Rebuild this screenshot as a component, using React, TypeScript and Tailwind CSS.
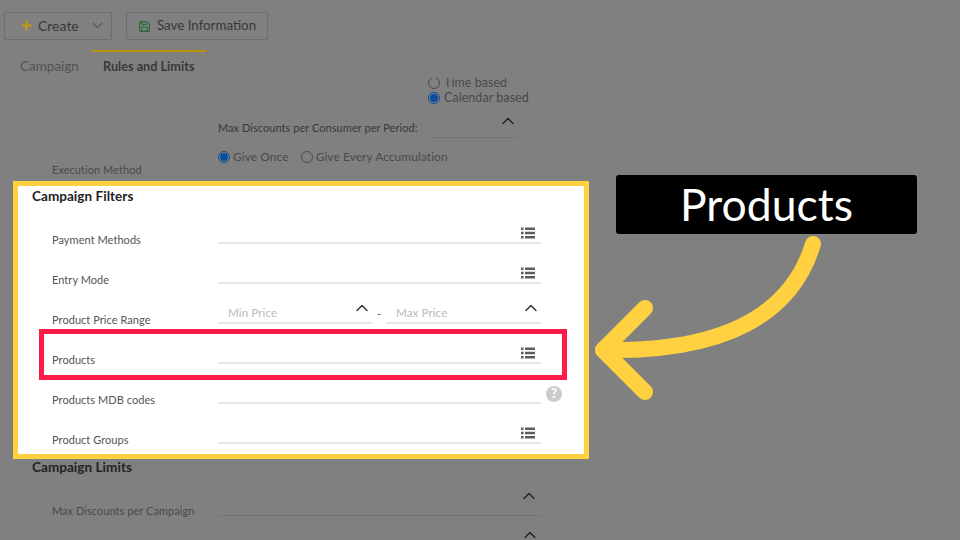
import { ChevronDown, ChevronUp, Plus, Save } from "lucide-react";

function ListIcon() {
  return (
    <svg width="14" height="12" viewBox="0 0 14 12" className="shrink-0 text-[#5c5c5c]" fill="currentColor">
      <rect x="0" y="0.5" width="2.5" height="2.5" />
      <rect x="4" y="0.5" width="10" height="2.5" />
      <rect x="0" y="4.75" width="2.5" height="2.5" />
      <rect x="4" y="4.75" width="10" height="2.5" />
      <rect x="0" y="9" width="2.5" height="2.5" />
      <rect x="4" y="9" width="10" height="2.5" />
    </svg>
  );
}

function Radio({ checked }: { checked?: boolean }) {
  return (
    <span
      className={`flex size-[12px] shrink-0 items-center justify-center rounded-full border ${
        checked ? "border-[#0a4d9c]" : "border-[#4a4a4a]"
      }`}
    >
      {checked && <span className="size-[8px] rounded-full bg-[#0a4d9c]" />}
    </span>
  );
}

function Row({ label, icon, children }: { label: string; icon?: boolean; children?: React.ReactNode }) {
  return (
    <div className="flex h-[40px] items-end pl-[34px] text-[11px] tracking-[0.05px] text-[#555]">
      <span className="-mb-[4px] w-[166px]">{label}</span>
      <div className="flex h-[24px] w-[323px] items-center justify-end border-b-2 border-[#e6e6e6] pl-[6px] pr-[6px] pt-[3px]">
        {icon && <ListIcon />}
      </div>
      {children}
    </div>
  );
}

export default function App() {
  return (
    <div
      className="relative h-[540px] w-[960px] overflow-hidden bg-[#808080] text-[#383838]"
      style={{ fontFamily: '"Lato", "Liberation Sans", sans-serif' }}
    >
      {/* Toolbar */}
      <div className="flex h-[50px] items-start gap-[14px] pl-[4px] pt-[12px]">
        <button className="flex h-[28px] w-[108px] items-center rounded-[2px] border border-[#6e6e6e] pb-[2px] pl-[14px] text-[14px]">
          <Plus size={15} strokeWidth={3} className="mr-[4px] text-[#c29c0a]" />
          Create
          <ChevronDown size={17} strokeWidth={1.3} className="ml-auto mr-[5px]" />
        </button>
        <button className="flex h-[28px] w-[142px] items-center rounded-[2px] border border-[#6e6e6e] pl-[11px] text-[13.3px]">
          <Save size={13} className="mr-[6px] text-[#1f6a30]" />
          Save Information
        </button>
      </div>

      {/* Tabs */}
      <div className="flex h-[28px]">
        <div className="ml-[20px] w-[72px] pt-[6px] text-[13.5px] text-[#525252]">Campaign</div>
        <div className="w-[114px] border-t-2 border-[#b8930a] pl-[11px] pt-[5px] text-[12.7px] font-bold">Rules and Limits</div>
      </div>

      {/* Scrolled form */}
      <div className="h-[462px] overflow-hidden text-[11px] tracking-[0.05px]">
        <div className="-mt-[2px] flex h-[14px] items-center gap-[4px] pl-[428px] text-[12.5px] text-[#4a4a4a]">
          <Radio />
          Time based
        </div>
        <div className="mt-[1px] flex h-[14px] items-center gap-[4px] pl-[428px] text-[12.5px] text-[#4a4a4a]">
          <Radio checked />
          Calendar based
        </div>
        <div className="mt-[7px] flex h-[26px] pl-[218px]">
          <span className="w-[212px] pt-[8px]">Max Discounts per Consumer per Period:</span>
          <div className="flex w-[88px] justify-end border-b border-[#747474]">
            <ChevronUp size={20} strokeWidth={1.7} className="-mt-[1px] text-[#222]" />
          </div>
        </div>
        <div className="mt-[12px] flex h-[14px] items-center gap-[3px] pl-[218px] text-[12px] text-[#4a4a4a]">
          <Radio checked />
          <span className="mr-[9px]">Give Once</span>
          <Radio />
          Give Every Accumulation
        </div>
        <div className="flex h-[14px] items-end pl-[52px] text-[#4a4a4a]">Execution Method</div>

        {/* Highlighted section */}
        <section className="ml-[13px] mt-[3px] h-[278px] w-[576px] border-[5px] border-[#ffd040] bg-white">
          <h2 className="pl-[14px] pt-[2px] text-[13.5px] font-bold leading-[16px] text-[#222]">Campaign Filters</h2>
          <div>
            <Row label="Payment Methods" icon />
            <Row label="Entry Mode" icon />
            <div className="flex h-[40px] items-end pl-[34px] text-[11px] text-[#555]">
              <span className="-mb-[4px] w-[166px]">Product Price Range</span>
              <div className="flex h-[24px] w-[154px] items-center justify-between border-b-2 border-[#e6e6e6] pl-[10px] pt-[3px] text-[11.7px] text-[#bbb]">
                Min Price
                <ChevronUp size={20} strokeWidth={1.7} className="-mt-[9px] text-[#333]" />
              </div>
              <span className="w-[14px] pb-[2px] text-center">-</span>
              <div className="flex h-[24px] w-[155px] items-center justify-between border-b-2 border-[#e6e6e6] pl-[10px] pt-[3px] text-[11.7px] text-[#bbb]">
                Max Price
                <ChevronUp size={20} strokeWidth={1.7} className="-mt-[9px] text-[#333]" />
              </div>
            </div>
            <Row label="Products" icon />
            <Row label="Products MDB codes">
              <span className="mb-[2px] ml-[5px] flex size-[16px] items-center justify-center rounded-full bg-[#ccc] text-[13px] font-bold text-white">
                ?
              </span>
            </Row>
            <Row label="Product Groups" icon />
          </div>
        </section>

        <h2 className="pl-[32px] text-[13.5px] font-bold leading-[16px] text-[#222]">Campaign Limits</h2>
        <div className="mt-[17px] flex h-[24px] items-end pl-[52px] text-[#4a4a4a]">
          <span className="-mb-[3px] w-[166px]">Max Discounts per Campaign</span>
          <div className="flex h-[24px] w-[323px] justify-end border-b border-[#747474] pr-[2px]">
            <ChevronUp size={20} strokeWidth={1.7} className="-mt-[6px] text-[#222]" />
          </div>
        </div>
        <div className="mt-[9px] flex justify-end pr-[420px]">
          <ChevronUp size={20} strokeWidth={1.7} className="text-[#222]" />
        </div>
      </div>

      {/* Annotation overlay */}
      <div className="absolute left-[39px] top-[329px] h-[51px] w-[528px] border-[5px] border-[#ff1a47]" />
      <div className="absolute left-[616px] top-[175px] flex h-[59px] w-[301px] items-center justify-center rounded-[3px] bg-black text-[44.5px] text-white">
        Products
      </div>
      <svg className="absolute inset-0" width="960" height="540" viewBox="0 0 960 540" fill="none">
        <g stroke="#ffd040" strokeWidth="16" strokeLinecap="round" strokeLinejoin="round">
          <path d="M813 244 C790 320 715 352 603 350" />
          <path d="M645 308 L603 350 L645 392" />
        </g>
      </svg>
    </div>
  );
}
